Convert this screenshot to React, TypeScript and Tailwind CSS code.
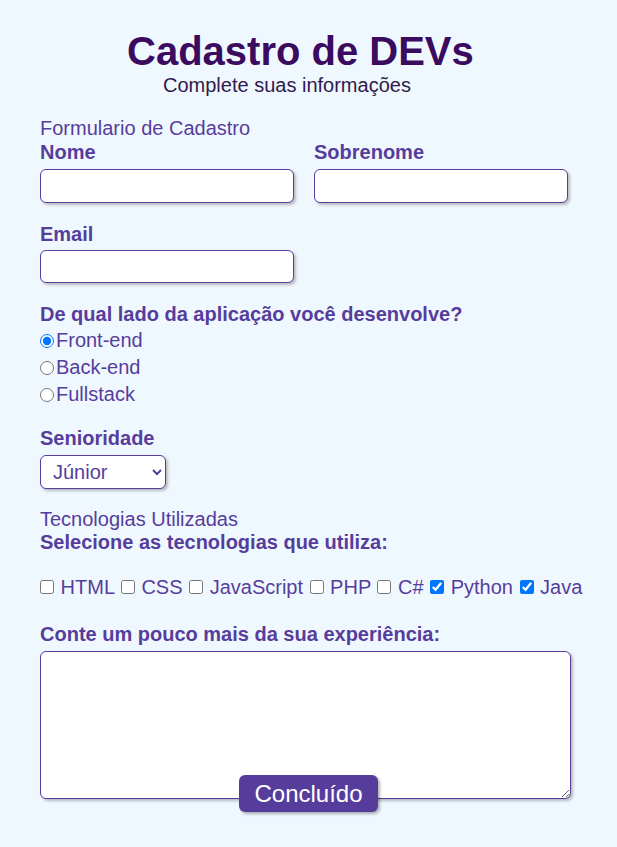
import React from "react";

const field =
  "block bg-white border border-[#563d9c] rounded-[6px] shadow-[2px_2px_3px_rgba(0,0,0,0.25)] outline-none";

export default function App() {
  const techs = [
    { name: "HTML", checked: false },
    { name: "CSS", checked: false },
    { name: "JavaScript", checked: false },
    { name: "PHP", checked: false },
    { name: "C#", checked: false },
    { name: "Python", checked: true },
    { name: "Java", checked: true },
  ];

  return (
    <div className="min-h-[847px] bg-[#f0f8ff] text-[20px] leading-[23px] text-[#563d9c] font-['Liberation_Sans',Arial,sans-serif]">
      {/* Header */}
      <header className="pt-[28px]">
        <h1 className="pl-[127px] text-[40px] leading-[46px] font-bold text-[#3b0b5f]">
          Cadastro de DEVs
        </h1>
        <p className="pl-[163px] text-[#2f1a4c]">Complete suas informações</p>
      </header>

      <form className="px-[40px] pt-[20px] pb-[36px]">
        <p>Formulario de Cadastro</p>

        {/* Nome / Sobrenome */}
        <div className="flex gap-[20px] mt-[1px]">
          <div>
            <label className="block font-bold">Nome</label>
            <input type="text" className={`${field} mt-[5px] w-[254px] h-[34px]`} />
          </div>
          <div>
            <label className="block font-bold">Sobrenome</label>
            <input type="text" className={`${field} mt-[5px] w-[254px] h-[34px]`} />
          </div>
        </div>

        {/* Email */}
        <div className="mt-[20px]">
          <label className="block font-bold">Email</label>
          <input type="email" className={`${field} mt-[4px] w-[254px] h-[33px]`} />
        </div>

        {/* Lado */}
        <div className="mt-[20px]">
          <p className="font-bold">De qual lado da aplicação você desenvolve?</p>
          <div className="mt-[1px]">
            {["Front-end", "Back-end", "Fullstack"].map((opt, i) => (
              <label key={opt} className="flex items-center h-[27px]">
                <input
                  type="radio"
                  name="lado"
                  defaultChecked={i === 0}
                  className="m-0 mr-[2px] w-[14px] h-[14px]"
                />
                {opt}
              </label>
            ))}
          </div>
        </div>

        {/* Senioridade */}
        <div className="mt-[19px]">
          <label className="block font-bold">Senioridade</label>
          <select
            defaultValue="junior"
            className={`${field} mt-[5px] w-[126px] h-[34px] pl-[8px] text-[#563d9c]`}
          >
            <option value="junior">Júnior</option>
            <option value="pleno">Pleno</option>
            <option value="senior">Sênior</option>
          </select>
        </div>

        {/* Tecnologias */}
        <div className="mt-[19px]">
          <p>Tecnologias Utilizadas</p>
          <p className="font-bold">Selecione as tecnologias que utiliza:</p>
          <div className="mt-[22px] whitespace-nowrap">
            {techs.map((t, i) => (
              <React.Fragment key={t.name}>
                <input
                  type="checkbox"
                  defaultChecked={t.checked}
                  className={
                    i === 0
                      ? "m-0 mr-[1px] w-[14px] h-[14px]"
                      : "m-0 ml-[1px] mr-[1px] w-[14px] h-[14px]"
                  }
                />
                {` ${t.name} `}
              </React.Fragment>
            ))}
          </div>
        </div>

        {/* Experiencia */}
        <div className="mt-[24px]">
          <label className="block font-bold">Conte um pouco mais da sua experiência:</label>
          <textarea className={`${field} mt-[5px] w-[531px] h-[148px]`} />
        </div>

        <div className="relative flex justify-center -mt-[24px]">
          <button
            type="button"
            className="h-[37px] px-[15px] rounded-[6px] bg-[#563d9c] text-white text-[24px] leading-[28px] shadow-[2px_2px_3px_rgba(0,0,0,0.3)]"
          >
            Concluído
          </button>
        </div>
      </form>
    </div>
  );
}
